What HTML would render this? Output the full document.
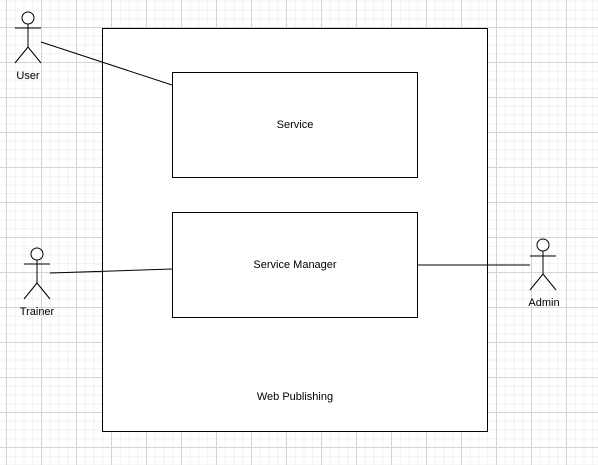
<!DOCTYPE html><html><head><style>
body{margin:0;width:598px;height:465px;overflow:hidden;background:#fff;
background-image:
linear-gradient(#d4d4d4 1px,transparent 1px),linear-gradient(90deg,#d4d4d4 1px,transparent 1px),
linear-gradient(#f1f1f1 1px,transparent 1px),linear-gradient(90deg,#f1f1f1 1px,transparent 1px);
background-size:35px 35px,35px 35px,8.75px 8.75px,8.75px 8.75px;
background-position:0 27px,6px 0,0 27px,6px 0;}
svg{position:absolute;left:0;top:0}
text{font-family:"Liberation Sans",sans-serif;font-size:11px;text-anchor:middle;fill:#000}
</style></head><body>
<svg width="598" height="465">
<g stroke="#000" fill="#fff" stroke-width="1">
<rect x="102.5" y="28.5" width="385" height="403"/>
<rect x="172.5" y="72.5" width="245" height="105"/>
<rect x="172.5" y="212.5" width="245" height="105"/>
<line x1="41" y1="42" x2="172" y2="85"/>
<line x1="50" y1="273" x2="172" y2="269"/>
<line x1="417" y1="265" x2="530" y2="265"/>
</g>
<g stroke="#000" fill="#fff" stroke-width="1">
<circle cx="28" cy="18" r="6"/><path d="M28 24V47M15 28H41M28 47L15 63M28 47L41 63" fill="none"/>
<circle cx="37" cy="254" r="6"/><path d="M37 260V283M24 264H50M37 283L24 299M37 283L50 299" fill="none"/>
<circle cx="543" cy="245" r="6"/><path d="M543 251V274M530 256H556M543 274L530 290M543 274L556 290" fill="none"/>
</g>
<text x="28" y="79">User</text>
<text x="37" y="315">Trainer</text>
<text x="544" y="306">Admin</text>
<text x="295" y="128">Service</text>
<text x="295" y="268">Service Manager</text>
<text x="295" y="400">Web Publishing</text>
</svg>
</body></html>
